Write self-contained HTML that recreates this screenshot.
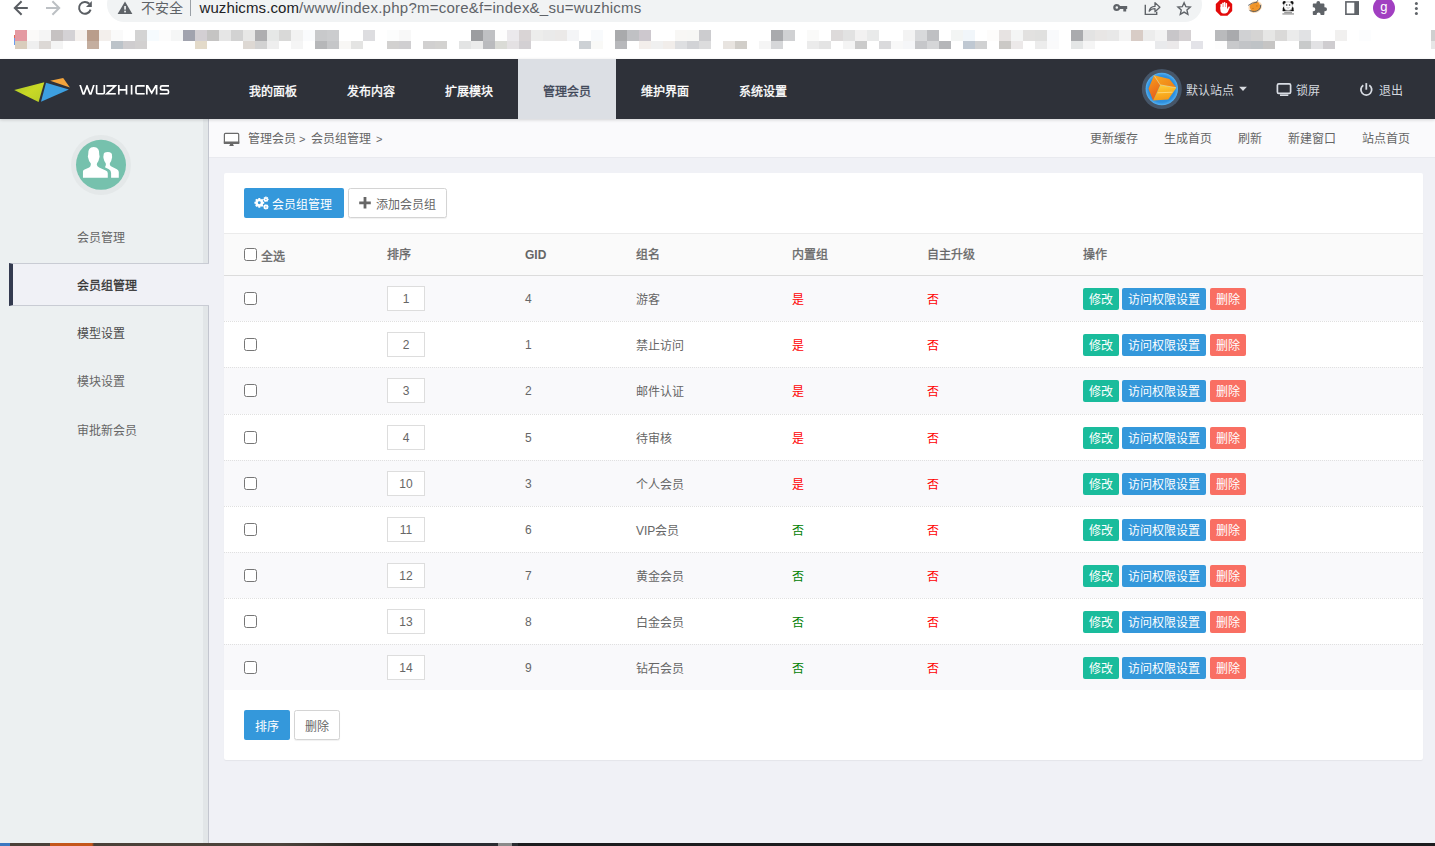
<!DOCTYPE html>
<html lang="zh-CN">
<head>
<meta charset="utf-8">
<title>WUZHICMS</title>
<style>
*{box-sizing:border-box;margin:0;padding:0}
html,body{width:1435px;height:846px;overflow:hidden;background:#fff}
body{position:relative;font-family:"Liberation Sans",sans-serif;font-size:12px;color:#666;line-height:1}
.abs{position:absolute}
svg{display:block;position:absolute;overflow:visible}
/* ---------- browser chrome ---------- */
#chrome{position:absolute;left:0;top:0;width:1435px;height:59px;background:#fff}
#pill{position:absolute;left:107px;top:-13px;width:1095px;height:34.5px;border-radius:17.25px;background:#f1f3f4}
#insec{position:absolute;left:140.5px;top:0;font-size:14px;line-height:17px;color:#5f6368;letter-spacing:0}
#sep{position:absolute;left:190px;top:0;width:1px;height:15.5px;background:#9aa0a6}
#url{position:absolute;left:199.5px;top:-1px;font-size:15px;line-height:18px;color:#5f6368;white-space:nowrap;letter-spacing:.245px}
#url b{font-weight:normal;color:#202124;letter-spacing:.1px}
#avatar{position:absolute;left:1372.5px;top:-3.5px;width:22.5px;height:22.5px;border-radius:50%;background:#a13fc1;color:#fff;font-size:13px;line-height:20px;text-align:center}
#mosaic i{position:absolute;display:block;width:12px}
/* ---------- header ---------- */
#hdr{position:absolute;left:0;top:59px;width:1435px;height:60px;background:#2e3139;z-index:5;box-shadow:0 1px 3px rgba(0,0,0,.16)}
.nav{position:absolute;top:0;width:98px;height:60px;line-height:67px;text-align:center;color:#fff;font-weight:500;font-size:12px;-webkit-text-stroke:.35px currentColor}
.nav.on{background:#dcdfe4;color:#3d4556}
.hr{position:absolute;top:0;height:60px;line-height:64px;color:#d3d7de;font-size:12px;white-space:nowrap}
/* ---------- sidebar ---------- */
#side{position:absolute;left:0;top:119px;width:209px;height:724px;background:#ecf0f1;border-right:1px solid #c3c6cf}
#side .edge{position:absolute;left:203px;top:0;width:5px;height:724px;background:#e2e6e8}
#side .it{position:absolute;left:77px;font-size:12px;line-height:14px;color:#666;white-space:nowrap}
#side .act{position:absolute;left:9px;top:144px;width:200px;height:43px;background:#f0f1f6;border-top:1px solid #c9ccd4;border-bottom:1px solid #c9ccd4;border-left:4px solid #343b50}
/* ---------- main ---------- */
#main{position:absolute;left:209px;top:119px;width:1226px;height:724px;background:#f0f1f6}
#crumb{position:absolute;left:0;top:0;width:1226px;height:39px;background:#fafafc;border-bottom:1px solid #e9eaef}
#crumb span{position:absolute;top:13px;line-height:14px;color:#666;white-space:nowrap}
#panel{position:absolute;left:15px;top:54px;width:1199px;height:587px;background:#fff;border-radius:2px;box-shadow:0 1px 1px rgba(0,0,0,.05)}
.btn{position:absolute;height:30px;line-height:34px;overflow:hidden;border-radius:2px;font-size:12px;white-space:nowrap;text-align:center}
.btn.blue{background:#3498db;color:#fff}
.btn.wh{background:#fff;border:1px solid #d4d4d4;color:#666;line-height:32px;border-radius:2.5px;box-shadow:0 1px 1px rgba(0,0,0,.06)}
#thead{position:absolute;left:0;top:60px;width:1199px;height:43px;background:#fafafa;border-top:1px solid #ebebeb;border-bottom:1px solid #dcdcdc}
#thead b{position:absolute;top:14px;line-height:14px;color:#666;font-weight:500;-webkit-text-stroke:.3px #666;white-space:nowrap}
.row{position:absolute;left:0;width:1199px;border-top:1px dotted #e0e0e0;background:#fff}
.row.odd{background:#f9f9fb}
.row.first{border-top:0}
.row span{position:absolute;top:16px;line-height:16px;white-space:nowrap;color:#666}
.cb{position:absolute;left:20px;width:13px;height:13px;border:1px solid #767676;border-radius:2.5px;background:#fff}
.row .cb{top:16px}
.ipt{position:absolute;left:163px;top:10px;width:38px;height:25px;border:1px solid #ddd;background:#fff;text-align:center;line-height:25px;color:#666;font-size:12px}
.ob{position:absolute;top:12px;height:22px;line-height:25px;overflow:hidden;border-radius:2px;color:#fff;text-align:center;font-size:12px;white-space:nowrap}
.ob.g{left:859px;width:36px;background:#1abc9c}
.ob.b{left:898px;width:84px;background:#3498db}
.ob.r{left:986px;width:36px;background:#f96f63}
.red{color:#f00 !important}
.grn{color:#008000 !important}
#strip{position:absolute;left:0;top:843px;width:1435px;height:3px;background:linear-gradient(90deg,#3a77c0 0,#3a77c0 10px,#4a4038 10px,#4a4038 50px,#c4561a 50px,#c4561a 92px,#4a4038 94px,#4d443c 280px,#2a2622 365px,#1d1d1f 440px,#2a2c31 440px,#2a2c31 498px,#8a8a8a 498px,#8a8a8a 512px,#2a2c31 512px,#2a2c31 518px,#1c1c1e 518px,#1c1c1e 100%)}
</style>
</head>
<body>
<div id="chrome">
  <div id="pill"></div>
  <div id="insec">不安全</div>
  <div id="sep"></div>
  <div id="url"><b>wuzhicms.com</b>/www/index.php?m=core&amp;f=index&amp;_su=wuzhicms</div>

  <svg id="ci" width="1435" height="30" style="left:0;top:0" viewBox="0 0 1435 30">
    <!-- back -->
    <path d="M27.8 8H15.2M21.6 1.2L14.8 8l6.8 6.8" fill="none" stroke="#5a5e63" stroke-width="2"/>
    <!-- forward -->
    <path d="M46 8h12.8M52.4 1.2L59.2 8l-6.8 6.8" fill="none" stroke="#bcc0c4" stroke-width="2"/>
    <!-- reload -->
    <path d="M89.3 3.8A5.9 5.9 0 1 0 90.6 9.6" fill="none" stroke="#5a5e63" stroke-width="2"/>
    <path d="M91.8 1.1v5.8h-5.8z" fill="#5a5e63"/>
    <!-- warning -->
    <path d="M125 1.6l7.4 12.3h-14.8z" fill="#5f6368"/>
    <rect x="124.2" y="6" width="1.7" height="3.6" fill="#f1f3f4"/>
    <rect x="124.2" y="10.7" width="1.7" height="1.7" fill="#f1f3f4"/>
    <!-- key -->
    <path d="M1116.8 3.9a3.6 3.6 0 1 0 0 7.2a3.6 3.6 0 0 0 3.3-2.1h3.2v2.6h2.9V9h1V6h-7.1a3.6 3.6 0 0 0-3.3-2.1zm0 2.3a1.3 1.3 0 1 1 0 2.6a1.3 1.3 0 0 1 0-2.6z" fill="#5f6368" fill-rule="evenodd"/>
    <!-- share -->
    <path d="M1145.3 4.8v9.6h11.4v-2.6" fill="none" stroke="#5f6368" stroke-width="1.4"/>
    <path d="M1149.2 11.2c.4-3 2.2-4.6 5.8-4.8V2.6l4.9 4.6-4.9 4.6V8.6c-2.6 0-4.400.8-5.800 2.600z" fill="none" stroke="#5f6368" stroke-width="1.3" stroke-linejoin="round"/>
    <!-- star -->
    <path d="M1184.100 2.200l1.950 4.350 4.750.450-3.600 3.150 1.050 4.650-4.150-2.450-4.150 2.450 1.050-4.650-3.600-3.150 4.750-.450z" fill="none" stroke="#5f6368" stroke-width="1.5" stroke-linejoin="miter" transform="translate(1184.100 8.700) scale(.92) translate(-1184.100 -8.700)"/>
    <!-- adblock -->
    <path d="M1220.600 -.700h6.800l4.800 4.800v6.800l-4.800 4.800h-6.800l-4.800-4.800v-6.800z" fill="#e30a0a"/>
    <g fill="#fff">
      <rect x="1220.500" y="3.800" width="1.500" height="6" rx=".75"/>
      <rect x="1222.200" y="2.500" width="1.500" height="7" rx=".75"/>
      <rect x="1223.900" y="2" width="1.500" height="7" rx=".75"/>
      <rect x="1225.600" y="3" width="1.500" height="7" rx=".75"/>
      <path d="M1220.500 7h6.600v2.200l1.300-2.300c.500-.900 1.800-.200 1.400.700l-1.700 3.600c-.600 1.400-1.500 2.200-3.100 2.200h-1.600c-1.700 0-2.900-1.200-2.900-2.900z"/>
    </g>
    <!-- orange ext -->
    <g transform="translate(1255.200 7)">
      <ellipse rx="7" ry="5.700" fill="#f9cf9f" opacity=".7" transform="rotate(-25)"/>
      <rect x="-5.100" y="-4.300" width="10.200" height="8.600" rx="3.200" fill="#f0952a" transform="rotate(-25)"/>
      <path d="M-7 -1.600Q-3 -4.500 1.800 -4.900" stroke="#4a5560" stroke-width=".8" fill="none"/>
      <path d="M-5.600 3.500Q0 5.600 3.500 3Q5.800 1 5.500 -2.200" stroke="#4a5560" stroke-width=".9" fill="none"/>
      <path d="M1.200 -4.600Q2.600 -6 2.800 -7.400" stroke="#4a5560" stroke-width=".7" fill="none"/>
      <circle cx="1.700" cy="-1.100" r=".65" fill="#c4741a"/>
      <circle cx="-2.200" cy="1.400" r=".65" fill="#c4741a"/>
    </g>
    <!-- panda -->
    <circle cx="1284.300" cy="2.900" r="1.800" fill="#111"/>
    <circle cx="1291.800" cy="2.900" r="1.800" fill="#111"/>
    <path d="M1282.700 11.100V8.500q0-1.500 1.500-2l1 4.600zM1293.600 11.100V8.500q0-1.500-1.500-2l-1 4.600z" fill="#111"/>
    <rect x="1282.700" y="10.300" width="10.900" height=".9" fill="#111"/>
    <circle cx="1288.050" cy="6.100" r="4.300" fill="#fff" stroke="#8a8a8a" stroke-width=".5"/>
    <ellipse cx="1286.700" cy="5" rx=".9" ry=".7" fill="#333"/>
    <ellipse cx="1289.600" cy="5" rx=".9" ry=".7" fill="#333"/>
    <path d="M1286.600 7.600q1.500 1.200 3 0" fill="none" stroke="#777" stroke-width=".5"/>
    <rect x="1284.200" y="12.300" width="7.800" height=".8" fill="#444" opacity=".75"/>
    <rect x="1282.400" y="13.500" width="11.600" height=".9" fill="#444" opacity=".8"/>
    <!-- puzzle -->
    <path d="M1322.800 3.500h-2.600v-.5a1.900 1.900 0 0 0-3.800 0v.5h-2.600c-.6 0-1 .4-1 1v2.700h.5a2 2 0 0 1 0 4h-.5V14c0 .6.400 1 1 1h2.800v-.5a2 2 0 0 1 4 0v.5h2.800c.6 0 1-.4 1-1v-2.700h.6a2 2 0 0 0 0-4h-.6V4.500c0-.6-.4-1-1.600-1z" fill="#5f6368"/>
    <!-- side panel -->
    <rect x="1345.900" y="1.900" width="12.300" height="12.300" fill="none" stroke="#5f6368" stroke-width="1.600"/>
    <rect x="1354.300" y="1.900" width="4" height="12.300" fill="#5f6368"/>
    <!-- dots -->
    <circle cx="1416.400" cy="3.400" r="1.500" fill="#5f6368"/>
    <circle cx="1416.400" cy="8.500" r="1.500" fill="#5f6368"/>
    <circle cx="1416.400" cy="13.600" r="1.500" fill="#5f6368"/>
  </svg>
  <div id="avatar">g</div>
  <div class="abs" style="left:14px;top:35px;width:1px;height:3px;background:#e06a5a"></div><div class="abs" style="left:14px;top:38px;width:1px;height:7px;background:#6a9cf0"></div>
  <div id="mosaic"><i style="left:15px;top:30px;height:11px;background:#e49aa2"></i><i style="left:27px;top:30px;height:11px;background:#fbfaf9"></i><i style="left:39px;top:30px;height:11px;background:#f5f5f5"></i><i style="left:51px;top:30px;height:11px;background:#c6c2c2"></i><i style="left:63px;top:30px;height:11px;background:#d4d2d5"></i><i style="left:75px;top:30px;height:11px;background:#f5f1ee"></i><i style="left:87px;top:30px;height:11px;background:#b99d8b"></i><i style="left:99px;top:30px;height:11px;background:#f3efec"></i><i style="left:111px;top:30px;height:11px;background:#fafafa"></i><i style="left:135px;top:30px;height:11px;background:#d3d3d3"></i><i style="left:147px;top:30px;height:11px;background:#f6fbfe"></i><i style="left:159px;top:30px;height:11px;background:#fcfcfc"></i><i style="left:171px;top:30px;height:11px;background:#f5f6f6"></i><i style="left:183px;top:30px;height:11px;background:#a1a3ae"></i><i style="left:195px;top:30px;height:11px;background:#d3cfd3"></i><i style="left:207px;top:30px;height:11px;background:#c5c4c3"></i><i style="left:219px;top:30px;height:11px;background:#e6e6e6"></i><i style="left:231px;top:30px;height:11px;background:#d2d2d2"></i><i style="left:243px;top:30px;height:11px;background:#e7e7e6"></i><i style="left:255px;top:30px;height:11px;background:#aeaeb0"></i><i style="left:267px;top:30px;height:11px;background:#e6e8e7"></i><i style="left:279px;top:30px;height:11px;background:#d9d9d8"></i><i style="left:291px;top:30px;height:11px;background:#f2f2f2"></i><i style="left:303px;top:30px;height:11px;background:#fafbfd"></i><i style="left:315px;top:30px;height:11px;background:#c8c9cb"></i><i style="left:327px;top:30px;height:11px;background:#cbccce"></i><i style="left:363px;top:30px;height:11px;background:#dddde0"></i><i style="left:387px;top:30px;height:11px;background:#fcfdfd"></i><i style="left:399px;top:30px;height:11px;background:#f8f8f8"></i><i style="left:471px;top:30px;height:11px;background:#9c9da0"></i><i style="left:483px;top:30px;height:11px;background:#bfc0c3"></i><i style="left:495px;top:30px;height:11px;background:#fdfdfd"></i><i style="left:507px;top:30px;height:11px;background:#ebe9ec"></i><i style="left:519px;top:30px;height:11px;background:#d9d4d5"></i><i style="left:531px;top:30px;height:11px;background:#ededec"></i><i style="left:543px;top:30px;height:11px;background:#eaeaea"></i><i style="left:555px;top:30px;height:11px;background:#ebe9e8"></i><i style="left:567px;top:30px;height:11px;background:#f4f5f7"></i><i style="left:591px;top:30px;height:11px;background:#f8fafc"></i><i style="left:615px;top:30px;height:11px;background:#a9aaac"></i><i style="left:627px;top:30px;height:11px;background:#c0c1c4"></i><i style="left:639px;top:30px;height:11px;background:#cdc8ce"></i><i style="left:675px;top:30px;height:11px;background:#f8f7f5"></i><i style="left:687px;top:30px;height:11px;background:#f7f7f5"></i><i style="left:699px;top:30px;height:11px;background:#cccccf"></i><i style="left:771px;top:30px;height:11px;background:#a9aaad"></i><i style="left:783px;top:30px;height:11px;background:#d0d1d3"></i><i style="left:807px;top:30px;height:11px;background:#fafaf9"></i><i style="left:831px;top:30px;height:11px;background:#dddada"></i><i style="left:843px;top:30px;height:11px;background:#e2e2e2"></i><i style="left:855px;top:30px;height:11px;background:#f2f1f1"></i><i style="left:867px;top:30px;height:11px;background:#e9eaea"></i><i style="left:903px;top:30px;height:11px;background:#f3f3f3"></i><i style="left:915px;top:30px;height:11px;background:#d8d9db"></i><i style="left:927px;top:30px;height:11px;background:#bfc0c3"></i><i style="left:951px;top:30px;height:11px;background:#f3f5f4"></i><i style="left:963px;top:30px;height:11px;background:#f1f6fa"></i><i style="left:987px;top:30px;height:11px;background:#fdfcfb"></i><i style="left:999px;top:30px;height:11px;background:#e7e3e2"></i><i style="left:1011px;top:30px;height:11px;background:#f4f5f5"></i><i style="left:1023px;top:30px;height:11px;background:#e2e1e0"></i><i style="left:1035px;top:30px;height:11px;background:#e0e0df"></i><i style="left:1047px;top:30px;height:11px;background:#f9fafc"></i><i style="left:1071px;top:30px;height:11px;background:#aaabae"></i><i style="left:1083px;top:30px;height:11px;background:#e3e3e3"></i><i style="left:1095px;top:30px;height:11px;background:#e8e6e5"></i><i style="left:1107px;top:30px;height:11px;background:#e8e8e8"></i><i style="left:1119px;top:30px;height:11px;background:#f4f4f4"></i><i style="left:1131px;top:30px;height:11px;background:#d8ccc6"></i><i style="left:1143px;top:30px;height:11px;background:#ececec"></i><i style="left:1155px;top:30px;height:11px;background:#f3f3f3"></i><i style="left:1167px;top:30px;height:11px;background:#c8c6c9"></i><i style="left:1179px;top:30px;height:11px;background:#d5d1d3"></i><i style="left:1215px;top:30px;height:11px;background:#b9babc"></i><i style="left:1227px;top:30px;height:11px;background:#a9aaad"></i><i style="left:1239px;top:30px;height:11px;background:#d0d1d3"></i><i style="left:1251px;top:30px;height:11px;background:#d5d4d3"></i><i style="left:1263px;top:30px;height:11px;background:#e6e6e5"></i><i style="left:1275px;top:30px;height:11px;background:#dad9d8"></i><i style="left:1287px;top:30px;height:11px;background:#ebebeb"></i><i style="left:1299px;top:30px;height:11px;background:#e1e2e4"></i><i style="left:1335px;top:30px;height:11px;background:#f1f0ef"></i><i style="left:1359px;top:30px;height:11px;background:#fcfdfe"></i><i style="left:1431px;top:30px;height:11px;background:#cfcfcf"></i><i style="left:15px;top:41px;height:8px;background:#d9cdbd"></i><i style="left:27px;top:41px;height:8px;background:#efefef"></i><i style="left:39px;top:41px;height:8px;background:#dcd8d5"></i><i style="left:51px;top:41px;height:8px;background:#f4f4f4"></i><i style="left:87px;top:41px;height:8px;background:#c4ae9f"></i><i style="left:111px;top:41px;height:8px;background:#bcc3c9"></i><i style="left:123px;top:41px;height:8px;background:#cfcdcf"></i><i style="left:135px;top:41px;height:8px;background:#d2d0d0"></i><i style="left:195px;top:41px;height:8px;background:#e3dac9"></i><i style="left:243px;top:41px;height:8px;background:#ddd8d3"></i><i style="left:255px;top:41px;height:8px;background:#d2d2d2"></i><i style="left:267px;top:41px;height:8px;background:#eeeeee"></i><i style="left:291px;top:41px;height:8px;background:#f5f5f5"></i><i style="left:315px;top:41px;height:8px;background:#b6b7b9"></i><i style="left:327px;top:41px;height:8px;background:#c5c6c8"></i><i style="left:339px;top:41px;height:8px;background:#f8f7f5"></i><i style="left:351px;top:41px;height:8px;background:#e4e4e3"></i><i style="left:387px;top:41px;height:8px;background:#d2d1d0"></i><i style="left:399px;top:41px;height:8px;background:#d0cfd1"></i><i style="left:423px;top:41px;height:8px;background:#d1d0d0"></i><i style="left:435px;top:41px;height:8px;background:#d3d2d0"></i><i style="left:459px;top:41px;height:8px;background:#e3e4e4"></i><i style="left:471px;top:41px;height:8px;background:#ebebeb"></i><i style="left:483px;top:41px;height:8px;background:#babbbe"></i><i style="left:495px;top:41px;height:8px;background:#dadbd6"></i><i style="left:507px;top:41px;height:8px;background:#e4e1e3"></i><i style="left:519px;top:41px;height:8px;background:#d3d0d3"></i><i style="left:579px;top:41px;height:8px;background:#cdd1d5"></i><i style="left:591px;top:41px;height:8px;background:#f9f9f7"></i><i style="left:615px;top:41px;height:8px;background:#b7b8bb"></i><i style="left:639px;top:41px;height:8px;background:#f3eeeb"></i><i style="left:651px;top:41px;height:8px;background:#f0f0f0"></i><i style="left:663px;top:41px;height:8px;background:#f1edea"></i><i style="left:675px;top:41px;height:8px;background:#dedfe1"></i><i style="left:687px;top:41px;height:8px;background:#d2d3d6"></i><i style="left:699px;top:41px;height:8px;background:#dcdcdd"></i><i style="left:723px;top:41px;height:8px;background:#e8e4e0"></i><i style="left:735px;top:41px;height:8px;background:#d1cec9"></i><i style="left:759px;top:41px;height:8px;background:#f5f5f5"></i><i style="left:771px;top:41px;height:8px;background:#d6d7d9"></i><i style="left:807px;top:41px;height:8px;background:#ebebeb"></i><i style="left:819px;top:41px;height:8px;background:#e4e4e4"></i><i style="left:843px;top:41px;height:8px;background:#f4f4f4"></i><i style="left:855px;top:41px;height:8px;background:#cbcbcb"></i><i style="left:879px;top:41px;height:8px;background:#dadadc"></i><i style="left:891px;top:41px;height:8px;background:#f8f8f8"></i><i style="left:903px;top:41px;height:8px;background:#f5f6f8"></i><i style="left:915px;top:41px;height:8px;background:#c6c7ca"></i><i style="left:927px;top:41px;height:8px;background:#d5d6d8"></i><i style="left:939px;top:41px;height:8px;background:#b5b6b9"></i><i style="left:963px;top:41px;height:8px;background:#bfc8d2"></i><i style="left:975px;top:41px;height:8px;background:#d0d1d2"></i><i style="left:999px;top:41px;height:8px;background:#cbc9c6"></i><i style="left:1011px;top:41px;height:8px;background:#ece9e9"></i><i style="left:1035px;top:41px;height:8px;background:#ececec"></i><i style="left:1047px;top:41px;height:8px;background:#fafafb"></i><i style="left:1071px;top:41px;height:8px;background:#e4e6e6"></i><i style="left:1083px;top:41px;height:8px;background:#f5f5f5"></i><i style="left:1155px;top:41px;height:8px;background:#e9eaec"></i><i style="left:1167px;top:41px;height:8px;background:#ebe9ea"></i><i style="left:1191px;top:41px;height:8px;background:#e3e3e8"></i><i style="left:1215px;top:41px;height:8px;background:#fdfdfd"></i><i style="left:1227px;top:41px;height:8px;background:#c8c9cb"></i><i style="left:1239px;top:41px;height:8px;background:#c2c4c7"></i><i style="left:1251px;top:41px;height:8px;background:#bfc3c6"></i><i style="left:1263px;top:41px;height:8px;background:#c6c5c4"></i><i style="left:1299px;top:41px;height:8px;background:#c8caca"></i><i style="left:1311px;top:41px;height:8px;background:#e2e2e4"></i><i style="left:1323px;top:41px;height:8px;background:#cfcdd0"></i><i style="left:1431px;top:41px;height:8px;background:#e6e6e6"></i></div>
</div>

<div id="hdr">

  <svg width="1435" height="60" style="left:0;top:0" viewBox="0 59 1435 60">
    <defs>
      <linearGradient id="gG" x1="0" y1="0" x2="1" y2="1"><stop offset="0" stop-color="#a9c62a"/><stop offset=".5" stop-color="#c9d925"/><stop offset="1" stop-color="#b5cc28"/></linearGradient>
      <linearGradient id="gL" x1="0" y1="0" x2=".3" y2="1"><stop offset="0" stop-color="#f7a21c"/><stop offset="1" stop-color="#e8601a"/></linearGradient>
      <linearGradient id="gT" x1="0" y1="0" x2="1" y2=".6"><stop offset="0" stop-color="#f9a61e"/><stop offset="1" stop-color="#ee8418"/></linearGradient>
      <linearGradient id="gR" x1="0" y1="0" x2=".2" y2="1"><stop offset="0" stop-color="#fdd040"/><stop offset=".45" stop-color="#fbb826"/><stop offset="1" stop-color="#f59a18"/></linearGradient>
      <radialGradient id="gB" cx=".5" cy=".5" r=".5"><stop offset="0" stop-color="#2a86d4"/><stop offset=".82" stop-color="#2e90de"/><stop offset="1" stop-color="#52b0f2"/></radialGradient>
    </defs>
    <!-- logo mark -->
    <path d="M14.200 90L44.300 82.300L38.600 102z" fill="url(#gG)"/>
    <path d="M46 82.800L68.900 89.600L41 101.700z" fill="#3d9fe0"/>
    <path d="M50.200 80.800L63.200 77.900L69.900 87.400z" fill="#f2a43c"/>
    <!-- WUZHICMS -->
    <clipPath id="cpT"><rect x="78" y="85" width="93" height="9.800"/></clipPath>
    <g fill="none" stroke="#fff" stroke-width="1.700" stroke-linejoin="miter" stroke-linecap="butt" clip-path="url(#cpT)">
      <path d="M80 84.600L83.500 95.200L87 86L90.500 95.200L94 84.600"/>
      <path d="M96.600 85v7.400q0 1.500 1.500 1.500h4.700q1.500 0 1.500-1.500V85"/>
      <path d="M106.400 85.900h8.800L106.800 93.900h9"/>
      <path d="M118.800 85v9.800M126.500 85v9.800M118.800 89.800h7.700"/>
      <path d="M131.600 85v9.800"/>
      <path d="M144.700 85.900h-7.200q-1.500 0-1.500 1.500v5q0 1.500 1.500 1.500h7.200"/>
      <path d="M146.800 94.800V85.900h.8L151.700 93L155.800 85.900h.8v8.900"/>
      <path d="M169 85.900h-7q-1.500 0-1.500 1.500v1q0 1.500 1.500 1.500h5q1.500 0 1.500 1.500v1q0 1.500-1.500 1.500h-7.300"/>
    </g>
    <!-- site orb -->
    <circle cx="1161.800" cy="89" r="20" fill="#465669"/>
    <circle cx="1161.800" cy="89" r="16.200" fill="url(#gB)"/>
    <path d="M1154 75.300L1148.500 88.700L1153.100 100.500L1160.200 84.900z" fill="url(#gL)"/>
    <path d="M1154 75.300L1169.400 79L1176.400 87.800L1160.200 84.900z" fill="url(#gT)"/>
    <path d="M1160.200 84.900L1176.400 87.800L1168.200 99.500L1153.100 100.500z" fill="url(#gR)"/>
    <path d="M1154.200 75.600L1160.200 84.900L1176 87.700" fill="none" stroke="#ffe9a0" stroke-width=".7" opacity=".8"/>
    <path d="M1157.500 92.800L1172.500 92.200" fill="none" stroke="#fff0b8" stroke-width=".8" opacity=".7"/>
    <!-- caret -->
    <path d="M1239.100 86.800h7.800l-3.900 4.300z" fill="#d8dbe0"/>
    <!-- monitor -->
    <rect x="1277.400" y="83.900" width="13.200" height="9.400" rx="1.400" fill="none" stroke="#d8dce3" stroke-width="1.700"/>
    <path d="M1280 95.200h8.300" stroke="#d8dce3" stroke-width="1.600" fill="none"/>
    <!-- power -->
    <path d="M1363.300 85.200a5.400 5.400 0 1 0 6 0" fill="none" stroke="#d8dce3" stroke-width="1.800"/>
    <path d="M1366.300 83.100v6.600" stroke="#d8dce3" stroke-width="1.800" fill="none"/>
  </svg>
  <div class="nav" style="left:224px">我的面板</div>
  <div class="nav" style="left:322px">发布内容</div>
  <div class="nav" style="left:420px">扩展模块</div>
  <div class="nav on" style="left:518px">管理会员</div>
  <div class="nav" style="left:616px">维护界面</div>
  <div class="nav" style="left:714px">系统设置</div>
  <div class="hr" style="left:1186px">默认站点</div>
  <div class="hr" style="left:1296px">锁屏</div>
  <div class="hr" style="left:1379px">退出</div>
</div>

<div id="side">

  <svg width="209" height="100" style="left:0;top:0" viewBox="0 119 209 100">
    <circle cx="101" cy="165" r="30" fill="#e4e8e9"/>
    <circle cx="101" cy="164.800" r="25" fill="#76c1ad"/>
    <g transform="translate(66 130) scale(.08274)" fill="#fff">
      <path d="M455 300Q450 265 505 265Q560 265 556 310Q561 330 553 347Q550 378 530 402L530 420Q535 435 555 445L615 475Q638 486 638 508L638 578L545 578L545 520Q545 488 518 474L470 449Q480 440 482 421L480 402Q460 376 455 347Q447 330 455 300Z"/>
      <path d="M205 578L205 502Q205 486 225 478L280 452Q300 441 300 416L300 405Q272 371 267 333Q260 320 268 298Q262 205 335 205Q408 205 402 298Q410 320 403 336Q398 371 375 401L372 420Q375 440 400 452L480 490Q505 501 505 522L505 578Z"/>
    </g>
  </svg>
  <div class="edge"></div>
  <div class="act"></div>
  <div class="it" style="top:112px">会员管理</div>
  <div class="it" style="top:160px;font-weight:500;-webkit-text-stroke:.3px #333;color:#333">会员组管理</div>
  <div class="it" style="top:208px;color:#4a4a4a">模型设置</div>
  <div class="it" style="top:256px">模块设置</div>
  <div class="it" style="top:305px">审批新会员</div>
</div>

<div id="main">
  <div id="crumb">

    <svg width="20" height="16" style="left:14px;top:13px" viewBox="223 132 20 16">
      <rect x="224.400" y="133.400" width="14.300" height="10" rx="1" fill="#fff" stroke="#6a6a6a" stroke-width="1.200"/>
      <rect x="223.800" y="141.500" width="15.500" height="2.500" fill="#6a6a6a"/>
      <path d="M230.200 144h2.800l.9 1.900h-4.700z" fill="#666"/>
    </svg>
    <span style="left:39px">管理会员</span><span style="left:90px;font-size:11px">&gt;</span><span style="left:102px">会员组管理</span><span style="left:167px;font-size:11px">&gt;</span>
    <span style="left:881px">更新缓存</span>
    <span style="left:955px">生成首页</span>
    <span style="left:1029px">刷新</span>
    <span style="left:1079px">新建窗口</span>
    <span style="left:1153px">站点首页</span>
  </div>
  <div id="panel">
    <div class="btn blue" style="left:20px;top:15px;width:100px;padding-left:16px">会员组管理</div>
    <div class="btn wh" style="left:124px;top:15px;width:99px;padding-left:17px">添加会员组</div>

    <svg width="1199" height="60" style="left:0;top:0" viewBox="224 173 1199 60">
      <!-- cogs (drawn over blue button) -->
      <g fill="#fff">
        <circle cx="259.300" cy="202.800" r="3.900"/>
        <g stroke="#fff" stroke-width="2" fill="none" stroke-linecap="butt">
          <path d="M259.300 197.900v9.800M254.400 202.800h9.800M255.850 199.350l6.900 6.900M262.750 199.350l-6.900 6.900"/>
        </g>
        <circle cx="265.900" cy="199.300" r="1.900"/>
        <g stroke="#fff" stroke-width="1.300" fill="none">
          <path d="M265.900 196.600v5.400M263.200 199.300h5.400M264 197.400l3.800 3.800M267.800 197.400l-3.800 3.800"/>
        </g>
        <circle cx="265.900" cy="206.900" r="1.900"/>
        <g stroke="#fff" stroke-width="1.300" fill="none">
          <path d="M265.900 204.200v5.400M263.200 206.900h5.400M264 205l3.800 3.800M267.800 205l-3.800 3.800"/>
        </g>
      </g>
      <circle cx="259.300" cy="202.800" r="1.450" fill="#3498db"/>
      <circle cx="265.900" cy="199.300" r=".65" fill="#3498db"/>
      <circle cx="265.900" cy="206.900" r=".65" fill="#3498db"/>
    </svg>

    <svg width="14" height="14" style="left:135px;top:24px" viewBox="359 197 14 14">
      <path d="M359.200 202.800h11.600M365 197v11.600" stroke="#666" stroke-width="2.800" fill="none"/>
    </svg>
    <div id="thead">
      <div class="cb" style="top:14px"></div>
      <b style="left:37px;top:16px">全选</b>
      <b style="left:163px">排序</b>
      <b style="left:301px;font-weight:bold;-webkit-text-stroke:0">GID</b>
      <b style="left:412px">组名</b>
      <b style="left:568px">内置组</b>
      <b style="left:703px">自主升级</b>
      <b style="left:859px">操作</b>
    </div>
    <div id="rows">
    <div class="row odd first" style="top:103px;height:45px"><div class="cb"></div><div class="ipt">1</div><span style="left:301px;top:16px;line-height:15px">4</span><span style="left:412px">游客</span><span class="red" style="left:568px">是</span><span class="red" style="left:703px">否</span><div class="ob g">修改</div><div class="ob b">访问权限设置</div><div class="ob r">删除</div></div>
    <div class="row" style="top:148px;height:46px"><div class="cb"></div><div class="ipt">2</div><span style="left:301px;top:16px;line-height:15px">1</span><span style="left:412px">禁止访问</span><span class="red" style="left:568px">是</span><span class="red" style="left:703px">否</span><div class="ob g">修改</div><div class="ob b">访问权限设置</div><div class="ob r">删除</div></div>
    <div class="row odd" style="top:194px;height:47px"><div class="cb"></div><div class="ipt">3</div><span style="left:301px;top:16px;line-height:15px">2</span><span style="left:412px">邮件认证</span><span class="red" style="left:568px">是</span><span class="red" style="left:703px">否</span><div class="ob g">修改</div><div class="ob b">访问权限设置</div><div class="ob r">删除</div></div>
    <div class="row" style="top:241px;height:46px"><div class="cb"></div><div class="ipt">4</div><span style="left:301px;top:16px;line-height:15px">5</span><span style="left:412px">待审核</span><span class="red" style="left:568px">是</span><span class="red" style="left:703px">否</span><div class="ob g">修改</div><div class="ob b">访问权限设置</div><div class="ob r">删除</div></div>
    <div class="row odd" style="top:287px;height:46px"><div class="cb"></div><div class="ipt">10</div><span style="left:301px;top:16px;line-height:15px">3</span><span style="left:412px">个人会员</span><span class="red" style="left:568px">是</span><span class="red" style="left:703px">否</span><div class="ob g">修改</div><div class="ob b">访问权限设置</div><div class="ob r">删除</div></div>
    <div class="row" style="top:333px;height:46px"><div class="cb"></div><div class="ipt">11</div><span style="left:301px;top:16px;line-height:15px">6</span><span style="left:412px">VIP会员</span><span class="grn" style="left:568px">否</span><span class="red" style="left:703px">否</span><div class="ob g">修改</div><div class="ob b">访问权限设置</div><div class="ob r">删除</div></div>
    <div class="row odd" style="top:379px;height:46px"><div class="cb"></div><div class="ipt">12</div><span style="left:301px;top:16px;line-height:15px">7</span><span style="left:412px">黄金会员</span><span class="grn" style="left:568px">否</span><span class="red" style="left:703px">否</span><div class="ob g">修改</div><div class="ob b">访问权限设置</div><div class="ob r">删除</div></div>
    <div class="row" style="top:425px;height:46px"><div class="cb"></div><div class="ipt">13</div><span style="left:301px;top:16px;line-height:15px">8</span><span style="left:412px">白金会员</span><span class="grn" style="left:568px">否</span><span class="red" style="left:703px">否</span><div class="ob g">修改</div><div class="ob b">访问权限设置</div><div class="ob r">删除</div></div>
    <div class="row odd" style="top:471px;height:46px"><div class="cb"></div><div class="ipt">14</div><span style="left:301px;top:16px;line-height:15px">9</span><span style="left:412px">钻石会员</span><span class="grn" style="left:568px">否</span><span class="red" style="left:703px">否</span><div class="ob g">修改</div><div class="ob b">访问权限设置</div><div class="ob r">删除</div></div>
    </div>
    <div class="btn blue" style="left:20px;top:537px;width:46px">排序</div>
    <div class="btn wh" style="left:70px;top:537px;width:46px">删除</div>
  </div>
</div>
<div id="strip"></div>
</body>
</html>
